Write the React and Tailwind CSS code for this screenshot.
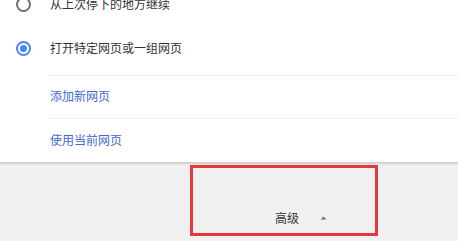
import React from "react";

const font = { fontFamily: '"Noto Sans CJK SC", "Noto Sans", sans-serif' };

function Radio({ checked }) {
  return (
    <div
      className={
        "w-[15px] h-[15px] rounded-full border-2 flex items-center justify-center shrink-0 " +
        (checked ? "border-[#4a86f0]" : "border-[#6f6f6f]")
      }
    >
      {checked && <div className="w-[7px] h-[7px] rounded-full bg-[#4a86f0]" />}
    </div>
  );
}

export default function App() {
  return (
    <div className="w-[458px] h-[241px] overflow-hidden bg-[#f1f1f1]" style={font}>
      <div className="bg-white -mt-[18px] border-b border-[#cfcfcf] shadow-[0_1px_2px_rgba(0,0,0,0.15)]">
        <div className="h-[44px] flex items-center pl-[16px]">
          <Radio />
          <span className="ml-[19px] text-[12px] leading-[14px] text-[#333]">从上次停下的地方继续</span>
        </div>
        <div className="h-[49px] pb-[5px] flex items-center pl-[16px]">
          <Radio checked />
          <span className="ml-[19px] text-[12px] leading-[14px] text-[#333]">打开特定网页或一组网页</span>
        </div>
        <div className="ml-[50px] border-t border-[#efefef] h-[43px] flex items-center pb-[2px]">
          <span className="text-[12px] leading-[14px] text-[#4169cf]">添加新网页</span>
        </div>
        <div className="ml-[50px] border-t border-[#efefef] h-[44px] flex items-center pb-[2px]">
          <span className="text-[12px] leading-[14px] text-[#4169cf]">使用当前网页</span>
        </div>
      </div>
      <div className="pt-[2px] pl-[190px]">
        <div className="w-[188px] h-[71px] border-[3px] border-[#e5383b] pl-[82px] pt-[43px]">
          <div className="flex items-center">
            <span className="text-[12px] leading-[14px] text-[#333]">高级</span>
            <svg className="ml-[21px]" width="7" height="4" viewBox="0 0 7 4">
              <path d="M0.5 3.5 L3.5 0.5 L6.5 3.5 Z" fill="#777" />
            </svg>
          </div>
        </div>
      </div>
    </div>
  );
}
